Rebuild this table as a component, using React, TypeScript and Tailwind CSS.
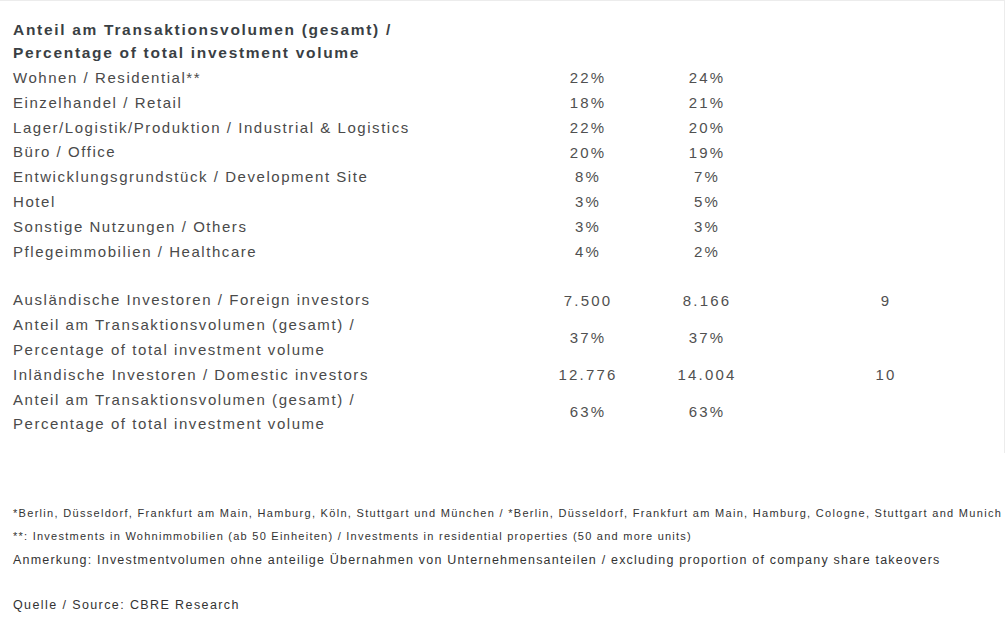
const rows = [
  { label: "Wohnen / Residential**", a: "22%", b: "24%" },
  { label: "Einzelhandel / Retail", a: "18%", b: "21%" },
  { label: "Lager/Logistik/Produktion / Industrial & Logistics", a: "22%", b: "20%" },
  { label: "Büro / Office", a: "20%", b: "19%" },
  { label: "Entwicklungsgrundstück / Development Site", a: "8%", b: "7%" },
  { label: "Hotel", a: "3%", b: "5%" },
  { label: "Sonstige Nutzungen / Others", a: "3%", b: "3%" },
  { label: "Pflegeimmobilien / Healthcare", a: "4%", b: "2%" },
];

const investors = [
  { label: ["Ausländische Investoren / Foreign investors"], a: "7.500", b: "8.166", c: "9" },
  {
    label: ["Anteil am Transaktionsvolumen (gesamt) /", "Percentage of total investment volume"],
    a: "37%",
    b: "37%",
    c: "",
  },
  { label: ["Inländische Investoren / Domestic investors"], a: "12.776", b: "14.004", c: "10" },
  {
    label: ["Anteil am Transaktionsvolumen (gesamt) /", "Percentage of total investment volume"],
    a: "63%",
    b: "63%",
    c: "",
  },
];

function Row({ label, a, b, c }: { label: string[]; a: string; b: string; c?: string }) {
  return (
    <div className="flex items-center">
      <div className="w-[540px] pl-[13px] tracking-[1.55px]">
        {label.map((l) => (
          <div key={l} className="h-[24.8px] leading-[24.8px] whitespace-nowrap">
            {l}
          </div>
        ))}
      </div>
      <div className="w-[96px] text-center tracking-[2.2px] text-[#505050]">{a}</div>
      <div className="w-[23px]" />
      <div className="w-[96px] text-center tracking-[2.2px] text-[#505050]">{b}</div>
      <div className="w-[83px]" />
      <div className="w-[96px] text-center tracking-[2.2px] text-[#505050]">{c}</div>
    </div>
  );
}

export default function App() {
  return (
    <div
      className="w-[1006px] h-[622px] bg-white overflow-hidden text-[#4a4a4a]"
      style={{ fontFamily: '"Liberation Sans", Arial, sans-serif' }}
    >
      <div className="w-[1005px] border-r border-t border-[#ececec] pt-[17px] pb-[16px] text-[15px]">
        <div className="pl-[13px] font-bold text-[#3a3f44] text-[15.5px] leading-[23px] tracking-[1.7px]">
          <div>Anteil am Transaktionsvolumen (gesamt) /</div>
          <div>Percentage of total investment volume</div>
        </div>
        <div className="mt-[2px]">
          {rows.map((r) => (
            <Row key={r.label} label={[r.label]} a={r.a} b={r.b} />
          ))}
        </div>
        <div className="h-[24px]" />
        {investors.map((r, i) => (
          <Row key={i} label={r.label} a={r.a} b={r.b} c={r.c} />
        ))}
      </div>

      <div className="pl-[13px] mt-[49px] text-[#333]">
        <div className="text-[11px] leading-[23px] tracking-[1.3px] whitespace-nowrap">
          *Berlin, Düsseldorf, Frankfurt am Main, Hamburg, Köln, Stuttgart und München / *Berlin, Düsseldorf,
          Frankfurt am Main, Hamburg, Cologne, Stuttgart and Munich
        </div>
        <div className="text-[11px] leading-[23px] tracking-[1.25px] whitespace-nowrap">
          **: Investments in Wohnimmobilien (ab 50 Einheiten) / Investments in residential properties (50 and more
          units)
        </div>
        <div className="text-[12.5px] leading-[23px] tracking-[1.2px] mt-[1px] whitespace-nowrap">
          Anmerkung: Investmentvolumen ohne anteilige Übernahmen von Unternehmensanteilen / excluding proportion of
          company share takeovers
        </div>
        <div className="text-[12.5px] leading-[23px] tracking-[1.4px] mt-[22px] whitespace-nowrap">
          Quelle / Source: CBRE Research
        </div>
      </div>
    </div>
  );
}
